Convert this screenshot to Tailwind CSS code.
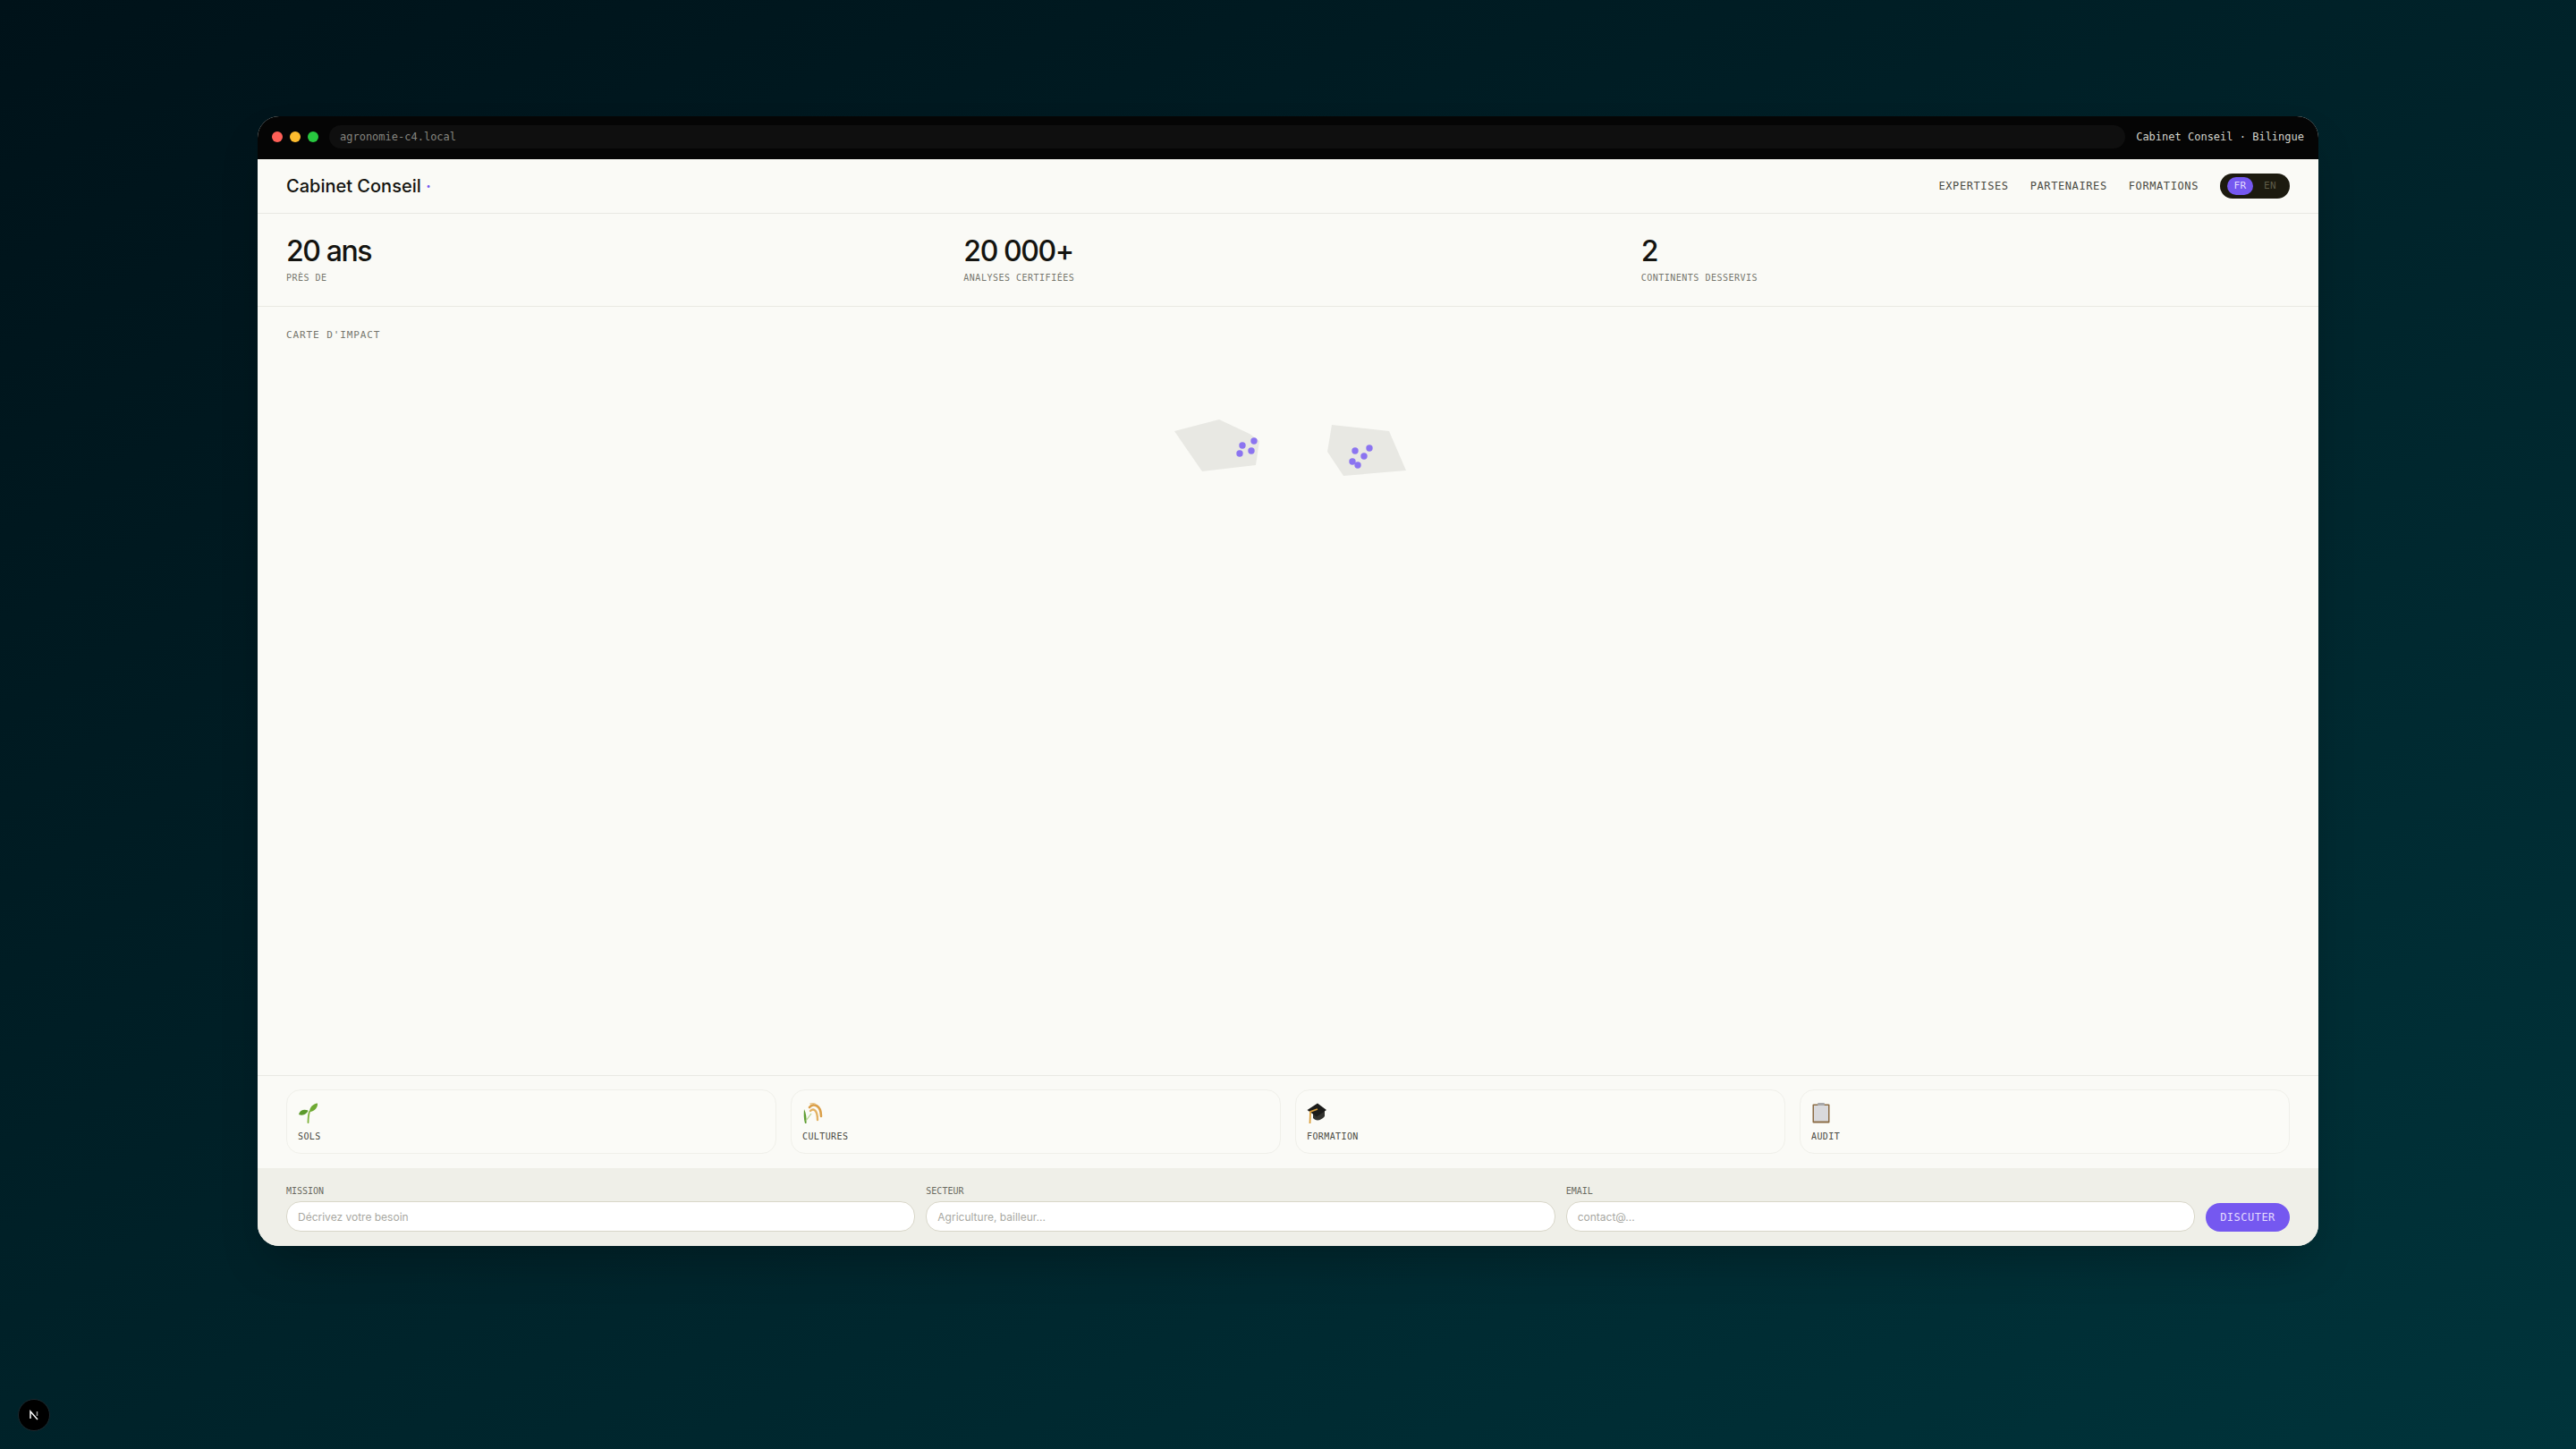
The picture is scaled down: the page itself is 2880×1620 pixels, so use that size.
<!DOCTYPE html>
<html lang="fr">
<head>
    <meta charset="UTF-8">
    <meta name="viewport" content="width=device-width, initial-scale=1.0">
    <title>Cabinet Conseil</title>
    <script src="https://cdn.jsdelivr.net/npm/@tailwindcss/browser@4"></script>
</head>
<body class="relative h-[1620px] overflow-hidden bg-gradient-to-br from-[#001219] to-[#00343b] font-['Inter',sans-serif]">
    <div class="pt-[130px] pl-[288px]">
        <div class="flex h-[1263px] w-[2304px] flex-col overflow-hidden rounded-3xl bg-[#fafaf6] shadow-2xl">

            <!-- Window bar -->
            <div class="flex h-12 shrink-0 items-center bg-[#050505] px-4 pb-0.5 font-['DejaVu_Sans_Mono',monospace] text-xs">
                <div class="flex gap-2">
                    <span class="h-3 w-3 rounded-full bg-[#ff5f57]"></span>
                    <span class="h-3 w-3 rounded-full bg-[#febc2e]"></span>
                    <span class="h-3 w-3 rounded-full bg-[#28c840]"></span>
                </div>
                <div class="ml-3 flex h-[26px] flex-1 items-center rounded-full bg-[#0f0f0f] px-3 text-[#85857f]">agronomie-c4.local</div>
                <div class="ml-3 text-[#d4d4cc]">Cabinet Conseil · Bilingue</div>
            </div>

            <!-- Header -->
            <header class="flex h-[61px] shrink-0 items-center justify-between border-b border-[#e9e9e3] px-8">
                <div class="text-xl font-medium leading-none text-[#141410]">Cabinet Conseil <span class="text-[#7558f0]">·</span></div>
                <nav class="flex items-center gap-6 font-['DejaVu_Sans_Mono',monospace] text-xs tracking-[0.6px] text-[#4a4a42]">
                    <a>EXPERTISES</a>
                    <a>PARTENAIRES</a>
                    <a>FORMATIONS</a>
                    <div class="flex h-7 w-[78px] items-center rounded-full bg-[#1c1a0f] pl-2 text-[11px] tracking-[0.5px]">
                        <span class="flex h-5 w-[29px] items-center justify-center rounded-full bg-[#7558f0] text-[#e4dcff]">FR</span>
                        <span class="ml-3 text-[#5e5c48]">EN</span>
                    </div>
                </nav>
            </header>

            <!-- Stats -->
            <section class="grid h-[104px] shrink-0 grid-cols-3 gap-8 border-b border-[#e9e9e3] px-8 pt-[22px]">
                <div>
                    <div class="text-[32px] font-medium leading-10 tracking-[-1.4px] text-[#141410]">20 ans</div>
                    <div class="font-['DejaVu_Sans_Mono',monospace] text-[10px] leading-5 tracking-[0.5px] text-[#77776e]">PRÈS DE</div>
                </div>
                <div>
                    <div class="text-[32px] font-medium leading-10 tracking-[-1.4px] text-[#141410]">20 000+</div>
                    <div class="font-['DejaVu_Sans_Mono',monospace] text-[10px] leading-5 tracking-[0.5px] text-[#77776e]">ANALYSES CERTIFIÉES</div>
                </div>
                <div>
                    <div class="text-[32px] font-medium leading-10 tracking-[-1.4px] text-[#141410]">2</div>
                    <div class="font-['DejaVu_Sans_Mono',monospace] text-[10px] leading-5 tracking-[0.5px] text-[#77776e]">CONTINENTS DESSERVIS</div>
                </div>
            </section>

            <!-- Impact map -->
            <section class="relative flex-1 px-8 pt-[25px]">
                <div class="font-['DejaVu_Sans_Mono',monospace] text-[11px] leading-[14px] tracking-[0.9px] text-[#77776e]">CARTE D'IMPACT</div>
                <svg class="absolute inset-0 h-full w-full" viewBox="288 343 2304 859">
                    <polygon points="1313,482 1363,469 1397,485 1408,493 1404,520 1344,527" fill="#e8e8e3" />
                    <polygon points="1489,475 1553,482 1572,526 1502,532 1484,505" fill="#e8e8e3" />
                    <g fill="#8b74f0">
                        <circle cx="1389" cy="498" r="3.7" />
                        <circle cx="1402" cy="493" r="3.7" />
                        <circle cx="1399" cy="504" r="3.7" />
                        <circle cx="1386" cy="507" r="3.7" />
                        <circle cx="1515" cy="504" r="3.7" />
                        <circle cx="1531" cy="501" r="3.7" />
                        <circle cx="1525" cy="510" r="3.7" />
                        <circle cx="1512" cy="516" r="3.7" />
                        <circle cx="1518" cy="520" r="3.7" />
                    </g>
                </svg>
            </section>

            <!-- Expertise cards -->
            <section class="grid h-[104px] shrink-0 grid-cols-4 gap-4 border-t border-[#e9e9e3] px-8 pt-[15px]">
                <div class="h-[72px] rounded-2xl border border-[#f0f0ea] bg-[#fbfbf7] px-3 pt-[13px]">
                    <svg class="h-6 w-6" viewBox="0 0 24 24">
                        <path d="M11.5 23 C11.6 18 11.8 14 13 11" fill="none" stroke="#7fb23a" stroke-width="1.8" stroke-linecap="round" />
                        <path d="M1 14 C2 9 7 7.5 11.5 9.5 C10.5 13 6 16 1 14Z" fill="#5c9a2c" />
                        <path d="M13 11 C13 6 17 2 22 1.5 C22.5 6 19 10.5 13 11Z" fill="#6faa33" />
                    </svg>
                    <div class="mt-[7px] font-['DejaVu_Sans_Mono',monospace] text-[10px] tracking-[0.4px] text-[#4a4a42]">SOLS</div>
                </div>
                <div class="h-[72px] rounded-2xl border border-[#f0f0ea] bg-[#fbfbf7] px-3 pt-[13px]">
                    <svg class="h-6 w-6" viewBox="0 0 24 24">
                        <path d="M3 24 C1.5 19 1.5 13 2 8 C4 12 5 18 4.5 24Z" fill="#5f9e33" />
                        <path d="M4 21 L10 13" stroke="#b5d28e" stroke-width="1.2" fill="none" />
                        <path d="M8 6 C12 1 21 3 21 16" fill="none" stroke="#dba04a" stroke-width="2.6" stroke-linecap="round" />
                        <path d="M9 10 C13 6 17 10 17 20" fill="none" stroke="#e3b263" stroke-width="2.4" stroke-linecap="round" />
                        <path d="M9 2 C10 1.5 13 1.5 14 2" fill="none" stroke="#e9c88c" stroke-width="1.4" stroke-linecap="round" />
                    </svg>
                    <div class="mt-[7px] font-['DejaVu_Sans_Mono',monospace] text-[10px] tracking-[0.4px] text-[#4a4a42]">CULTURES</div>
                </div>
                <div class="h-[72px] rounded-2xl border border-[#f0f0ea] bg-[#fbfbf7] px-3 pt-[13px]">
                    <svg class="h-6 w-6" viewBox="0 0 24 24">
                        <path d="M7 11 L7 18 C10 22 16 21 20 16 L20 10Z" fill="#33332f" />
                        <path d="M0.5 9 L12 1.5 L22 9 L11 16.5Z" fill="#1c1c1a" />
                        <path d="M12 8 L4 11 L3.5 24" fill="none" stroke="#dca03c" stroke-width="1.8" />
                    </svg>
                    <div class="mt-[7px] font-['DejaVu_Sans_Mono',monospace] text-[10px] tracking-[0.4px] text-[#4a4a42]">FORMATION</div>
                </div>
                <div class="h-[72px] rounded-2xl border border-[#f0f0ea] bg-[#fbfbf7] px-3 pt-[13px]">
                    <svg class="h-6 w-6" viewBox="0 0 24 24">
                        <rect x="1.5" y="2.5" width="19" height="21" rx="1" fill="#8c6d46" />
                        <rect x="3" y="4" width="16" height="17.5" fill="#d9d9dc" />
                        <rect x="7" y="1" width="8" height="3" rx="1" fill="#a8a8aa" />
                    </svg>
                    <div class="mt-[7px] font-['DejaVu_Sans_Mono',monospace] text-[10px] tracking-[0.4px] text-[#4a4a42]">AUDIT</div>
                </div>
            </section>

            <!-- Contact form -->
            <form class="flex h-[87px] shrink-0 items-end gap-3 bg-[#efefe8] px-8 pb-4">
                <label class="flex-1">
                    <span class="mb-1 block font-['DejaVu_Sans_Mono',monospace] text-[10px] text-[#6b6b62]">MISSION</span>
                    <input class="h-[34px] w-full rounded-2xl border border-[#d8d6c8] bg-white px-3 text-xs placeholder:text-[#a8a8a2]" placeholder="Décrivez votre besoin">
                </label>
                <label class="flex-1">
                    <span class="mb-1 block font-['DejaVu_Sans_Mono',monospace] text-[10px] text-[#6b6b62]">SECTEUR</span>
                    <input class="h-[34px] w-full rounded-2xl border border-[#d8d6c8] bg-white px-3 text-xs placeholder:text-[#a8a8a2]" placeholder="Agriculture, bailleur...">
                </label>
                <label class="flex-1">
                    <span class="mb-1 block font-['DejaVu_Sans_Mono',monospace] text-[10px] text-[#6b6b62]">EMAIL</span>
                    <input class="h-[34px] w-full rounded-2xl border border-[#d8d6c8] bg-white px-3 text-xs placeholder:text-[#a8a8a2]" placeholder="contact@...">
                </label>
                <button type="button" class="h-8 w-[94px] rounded-2xl bg-[#7558f0] font-['DejaVu_Sans_Mono',monospace] text-xs tracking-[0.48px] text-[#e4dcff]">DISCUTER</button>
            </form>
        </div>
    </div>

    <!-- Dev badge -->
    <div class="absolute bottom-[20px] left-[20px] flex h-9 w-9 items-center justify-center rounded-full border border-[#1c2a30] bg-black">
        <svg class="h-[18px] w-[18px]" viewBox="0 0 18 18" fill="none">
            <path d="M5 13 V5 L13 14" stroke="#fff" stroke-width="1.5" />
            <path d="M12.5 5 V10" stroke="#9a9a9a" stroke-width="1.5" />
        </svg>
    </div>
</body>
</html>
